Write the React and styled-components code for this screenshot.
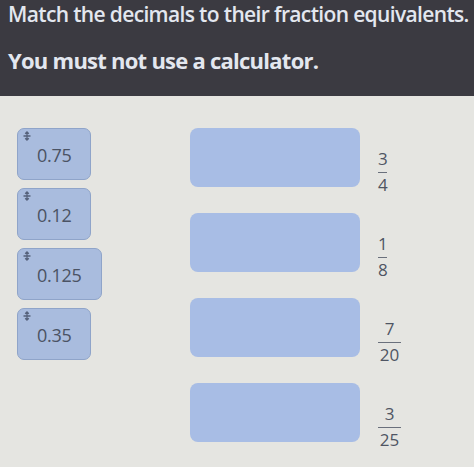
import React from "react";
import styled, { createGlobalStyle } from "styled-components";

const GlobalStyle = createGlobalStyle`
  html, body {
    margin: 0;
    padding: 0;
    background: #e5e5e1;
  }
  body {
    font-family: "Open Sans", "Liberation Sans", sans-serif;
  }
`;

const Page = styled.div`
  width: 474px;
  height: 467px;
  overflow: hidden;
  background: #e5e5e1;
`;

const Header = styled.header`
  background: #3b3a41;
  height: 96px;
  box-sizing: border-box;
  padding: 0 0 0 8px;
  color: #e3e7ef;
  display: flex;
  flex-direction: column;
`;

const Title = styled.h1`
  margin: 0;
  font-size: 21px;
  font-weight: 600;
  letter-spacing: -0.65px;
  line-height: 28px;
  white-space: nowrap;
`;

const Warning = styled.p`
  margin: 0;
  padding-top: 18px;
  font-size: 22px;
  font-weight: 700;
  letter-spacing: -0.75px;
  line-height: 28px;
  white-space: nowrap;
`;

const Board = styled.main`
  display: flex;
  padding: 32px 0 0 17px;
  gap: 88px;
`;

const Cards = styled.div`
  display: flex;
  flex-direction: column;
  gap: 8px;
`;

const Card = styled.div`
  position: relative;
  box-sizing: border-box;
  width: ${(p) => p.$w}px;
  height: 52px;
  background: #a9bcde;
  border: 1.5px solid #8fa4c9;
  border-radius: 7px;
  padding: 14px 0 0 19px;
  font-size: 18px;
  color: #4b5364;
  letter-spacing: -0.3px;
`;

const Grip = styled.svg`
  position: absolute;
  left: 4px;
  top: 2px;
`;

const Targets = styled.div`
  display: flex;
  flex-direction: column;
  gap: 26px;
`;

const Row = styled.div`
  display: flex;
  align-items: flex-start;
  gap: 18px;
  height: 59px;
`;

const Slot = styled.div`
  flex: none;
  width: 170px;
  height: 59px;
  background: #a8bde5;
  border-radius: 8px;
`;

const Fraction = styled.div`
  display: flex;
  flex-direction: column;
  align-items: center;
  margin-top: 21px;
  font-size: 17px;
  line-height: 19px;
  color: #4f5563;
`;

const Bar = styled.span`
  width: ${(p) => p.$w}px;
  height: 1px;
  background: #6a707c;
  margin: 4px 0 2px;
`;

const decimals = [
  { v: "0.75", w: 74 },
  { v: "0.12", w: 74 },
  { v: "0.125", w: 85 },
  { v: "0.35", w: 74 },
];

const fractions = [
  ["3", "4"],
  ["1", "8"],
  ["7", "20"],
  ["3", "25"],
];

const MoveIcon = () => (
  <Grip width="10" height="10" viewBox="0 0 10 10">
    <path
      d="M5 1 L5 9 M1.5 5 L8.5 5 M3.2 2.8 L5 1 L6.8 2.8 M3.2 7.2 L5 9 L6.8 7.2"
      stroke="#56627b"
      strokeWidth="1.3"
      fill="none"
    />
  </Grip>
);

export default function App() {
  return (
    <Page>
      <GlobalStyle />
      <Header>
        <Title>Match the decimals to their fraction equivalents.</Title>
        <Warning>You must not use a calculator.</Warning>
      </Header>
      <Board>
        <Cards>
          {decimals.map((d) => (
            <Card key={d.v} $w={d.w}>
              <MoveIcon />
              {d.v}
            </Card>
          ))}
        </Cards>
        <Targets>
          {fractions.map(([n, den], i) => (
            <Row key={i}>
              <Slot />
              <Fraction>
                <span>{n}</span>
                <Bar $w={den.length > 1 ? 23 : 9} />
                <span>{den}</span>
              </Fraction>
            </Row>
          ))}
        </Targets>
      </Board>
    </Page>
  );
}
